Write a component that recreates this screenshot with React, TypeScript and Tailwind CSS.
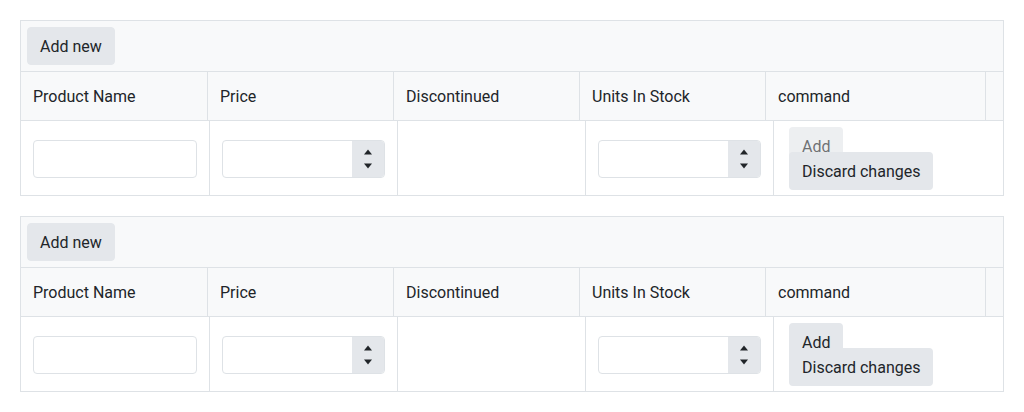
import React from "react";

const font = { fontFamily: "Roboto, 'Noto Sans', sans-serif" };

function NumInput() {
  return (
    <div className="flex h-[38px] w-full rounded-[4px] border border-[#dee2e6] bg-white overflow-hidden">
      <div className="flex-1" />
      <div className="flex w-[32px] flex-col items-center justify-center gap-[8px] bg-[#e4e7eb]">
        <svg width="10" height="6" viewBox="0 0 10 6"><path d="M5 0.5 L9 5.5 L1 5.5 Z" fill="#212529" /></svg>
        <svg width="10" height="6" viewBox="0 0 10 6"><path d="M1 0.5 L9 0.5 L5 5.5 Z" fill="#212529" /></svg>
      </div>
    </div>
  );
}

function Grid({ disabledAdd }: { disabledAdd: boolean }) {
  return (
    <div className="w-[984px] border border-[#dee2e6] text-[16px] leading-6 text-[#212529]" style={font}>
      <div className="border-b border-[#dee2e6] bg-[#f8f9fa] p-[6px]">
        <button className="h-[38px] rounded-[4px] border border-[#e4e7eb] bg-[#e4e7eb] px-3 pt-[1px] text-[#212529]">Add new</button>
      </div>
      <div className="flex h-[49px] border-b border-[#dee2e6] bg-[#f8f9fa]">
        <div className="flex w-[186px] items-center px-3 pt-[2px]">Product Name</div>
        <div className="flex w-[186px] items-center border-l border-[#dee2e6] px-3 pt-[2px]">Price</div>
        <div className="flex w-[186px] items-center border-l border-[#dee2e6] px-3 pt-[2px]">Discontinued</div>
        <div className="flex w-[186px] items-center border-l border-[#dee2e6] px-3 pt-[2px]">Units In Stock</div>
        <div className="flex w-[220px] items-center border-l border-[#dee2e6] px-3 pt-[2px]">command</div>
        <div className="w-[18px] border-l border-[#dee2e6]" />
      </div>
      <div className="flex h-[74px] bg-white">
        <div className="flex w-[188px] items-center px-3 pt-[1px]">
          <div className="h-[38px] w-full rounded-[4px] border border-[#dee2e6] bg-white" />
        </div>
        <div className="flex w-[188px] items-center border-l border-[#dee2e6] px-3 pt-[1px]">
          <NumInput />
        </div>
        <div className="w-[188px] border-l border-[#dee2e6]" />
        <div className="flex w-[188px] items-center border-l border-[#dee2e6] px-3 pt-[1px]">
          <NumInput />
        </div>
        <div className="flex w-[230px] flex-col items-start border-l border-[#dee2e6] pl-[15px] pt-[6px]">
          <button
            className={
              "h-[38px] rounded-[4px] bg-[#e4e7eb] px-[13px] pt-[1px] " +
              (disabledAdd ? "opacity-65" : "")
            }
          >
            Add
          </button>
          <button className="-mt-[13px] h-[38px] rounded-[4px] bg-[#e4e7eb] px-[13px] pt-[1px]">Discard changes</button>
        </div>
      </div>
    </div>
  );
}

export default function App() {
  return (
    <div className="flex flex-col gap-5 bg-white p-5">
      <Grid disabledAdd={true} />
      <Grid disabledAdd={false} />
    </div>
  );
}
